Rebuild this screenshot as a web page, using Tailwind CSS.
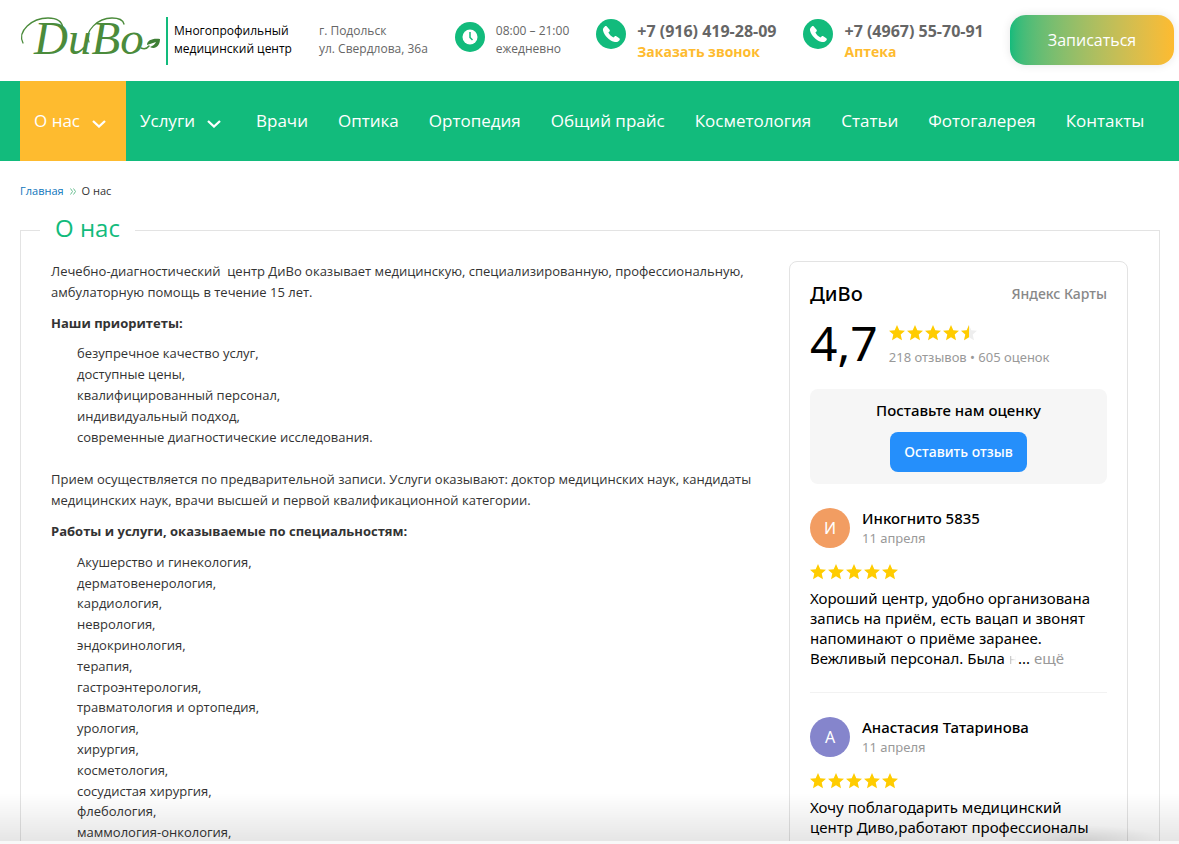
<!DOCTYPE html>
<html lang="ru">
  <head>
    <meta charset="UTF-8" />
    <meta name="viewport" content="width=device-width, initial-scale=1.0" />
    <title>О нас - ДиВо</title>
    <script src="https://cdn.jsdelivr.net/npm/@tailwindcss/browser@4"></script>
  </head>
  <body class="h-screen overflow-hidden bg-white font-['Open_Sans',sans-serif] text-[13px] leading-[1.6] text-[#333]">
    <!-- Icons -->
    <svg class="hidden">
      <symbol id="star" viewBox="0 0 16 16">
        <path d="M8 0l2.300 5.300 5.700.5-4.300 3.800 1.300 5.700L8 12.300l-5 3 1.300-5.700L0 5.800l5.700-.5z" />
      </symbol>
      <symbol id="phone" viewBox="0 0 30 30">
        <circle cx="15" cy="15" r="15" fill="#12bb7c" />
        <path d="M10.600 7.200c-.6-.4-1.300-.3-1.800.2-1.500 1.200-2.200 2.600-1.700 4.400 1 4.800 6.200 9.800 10.900 11 2.100.6 4.200.1 5.500-1.600.5-.7.4-1.400-.2-1.900l-3-2.100c-.6-.4-1.200-.3-1.700.2l-1.200 1.200c-2-1-4-2.900-5-5l1.100-1.200c.5-.5.5-1.100.1-1.700z" fill="#fff" />
      </symbol>
      <symbol id="chevron" viewBox="0 0 14 8">
        <path d="M1 1l6 5.500L13 1" fill="none" stroke="#fff" stroke-width="2.300" />
      </symbol>
    </svg>

    <!-- Header -->
    <header class="flex h-[81px] items-start pr-[5px] pl-5">
      <a href="#" class="mt-[17px] flex items-center text-xs leading-[18px] text-black">
        <svg class="mr-[6px] h-12 w-[140px] overflow-visible" viewBox="0 0 140 48" fill="none" stroke="#4b8b3b" stroke-linecap="round">
          <path d="M3 26C-3 14 12 1 28 1c8 0 14 3 15 10" stroke-width="1.300" />
          <path d="M69 25C64 14 78 1 92 1c7 0 11 2 12 6" stroke-width="1.300" />
          <text x="14" y="37" font-family="'Liberation Serif', serif" font-style="italic" font-size="47" fill="#4b8b3b" stroke="none">DиВо</text>
          <path d="M121 31q5 2 8-2" stroke-width="1.500" />
          <path d="M127 28c0-5 6-7 13-6 0 7-5 11-10 8 3-1 5-3 6-5-3 1-6 2-9 3z" fill="#3f7f35" stroke="none" />
        </svg>
        <span class="border-l-2 border-[#12bb7c] pt-[5px] pb-[7px] pl-[6px]">Многопрофильный<br />медицинский центр</span>
      </a>
      <div class="mt-[22px] ml-[27px] text-xs leading-[18px] text-[#666]">г. Подольск<br />ул. Свердлова, 36а</div>
      <div class="mt-[22px] ml-[27px] flex gap-[11px] text-xs leading-[18px] text-[#666]">
        <svg class="size-[30px]" viewBox="0 0 30 30">
          <circle cx="15" cy="15" r="15" fill="#12bb7c" />
          <circle cx="15" cy="15" r="7.500" fill="#fff" />
          <path d="M15 10v5.500l2.500 2.500" fill="none" stroke="#12bb7c" stroke-width="1.500" />
        </svg>
        <span>08:00 – 21:00<br />ежедневно</span>
      </div>
      <div class="mt-[19px] ml-[27px] flex gap-[11px]">
        <svg class="size-[30px]"><use href="#phone" /></svg>
        <div class="flex flex-col font-bold">
          <a href="tel:+79164192809" class="text-base leading-6 text-[#666]">+7 (916) 419-28-09</a>
          <a href="#" class="text-sm leading-[18px] text-[#febb2f]">Заказать звонок</a>
        </div>
      </div>
      <div class="mt-[19px] ml-[27px] flex gap-[11px]">
        <svg class="size-[30px]"><use href="#phone" /></svg>
        <div class="flex flex-col font-bold">
          <a href="tel:+74967557091" class="text-base leading-6 text-[#666]">+7 (4967) 55-70-91</a>
          <a href="#" class="text-sm leading-[18px] text-[#febb2f]">Аптека</a>
        </div>
      </div>
      <button class="mt-[15px] ml-auto h-[50px] w-[164px] rounded-2xl bg-linear-to-r from-[#12bb7c] to-[#febb2f] text-base text-white shadow-[0_0_10px_rgba(0,0,0,0.1)]">Записаться</button>
    </header>

    <!-- Menu -->
    <nav class="flex h-20 bg-[#12bb7c] pl-5 text-[17px] whitespace-nowrap text-white">
      <a href="#" class="flex items-center gap-3 bg-[#febb2f] pr-5 pl-[14px]">О нас <svg class="mt-[6px] h-2 w-[14px]"><use href="#chevron" /></svg></a>
      <a href="#" class="flex items-center gap-3 pr-5 pl-[14px]">Услуги <svg class="mt-[6px] h-2 w-[14px]"><use href="#chevron" /></svg></a>
      <a href="#" class="flex items-center px-[15px]">Врачи</a>
      <a href="#" class="flex items-center px-[15px]">Оптика</a>
      <a href="#" class="flex items-center px-[15px]">Ортопедия</a>
      <a href="#" class="flex items-center px-[15px]">Общий прайс</a>
      <a href="#" class="flex items-center px-[15px]">Косметология</a>
      <a href="#" class="flex items-center px-[15px]">Статьи</a>
      <a href="#" class="flex items-center px-[15px]">Фотогалерея</a>
      <a href="#" class="flex items-center px-[15px]">Контакты</a>
    </nav>

    <main class="pt-5 pr-[19px] pl-5">
      <div class="flex items-center gap-[6px] text-[11px] leading-5">
        <a href="#" class="text-[#0e76bc]">Главная</a>
        <svg class="h-[7px] w-[6px]" viewBox="0 0 6 7" fill="none" stroke="#6bbf92"><path d="M.5.500l2 3-2 3M3.500.500l2 3-2 3" /></svg>
        <span>О нас</span>
      </div>

      <fieldset class="mt-2 flex items-start border border-[#e3e3e3] pr-[31px] pb-5 pl-[30px]">
        <legend class="-ml-[11px] px-[15px] pb-1"><h1 class="text-2xl leading-[38px] text-[#12bb7c]">О нас</h1></legend>

        <div class="min-w-0 flex-1 pt-[10px] pr-7">
          <p>Лечебно-диагностический&nbsp; центр ДиВо оказывает медицинскую, специализированную, профессиональную, амбулаторную помощь в течение 15 лет.</p>
          <p class="mt-[10px] font-bold">Наши приоритеты:</p>
          <ul class="mt-[10px] pl-[26px]">
            <li>безупречное качество услуг,</li>
            <li>доступные цены,</li>
            <li>квалифицированный персонал,</li>
            <li>индивидуальный подход,</li>
            <li>современные диагностические исследования.</li>
          </ul>
          <p class="mt-[22px]">Прием осуществляется по предварительной записи. Услуги оказывают: доктор медицинских наук, кандидаты медицинских наук, врачи высшей и первой квалификационной категории.</p>
          <p class="mt-[10px] font-bold">Работы и услуги, оказываемые по специальностям:</p>
          <ul class="mt-[10px] pl-[26px]">
            <li>Акушерство и гинекология,</li>
            <li>дерматовенерология,</li>
            <li>кардиология,</li>
            <li>неврология,</li>
            <li>эндокринология,</li>
            <li>терапия,</li>
            <li>гастроэнтерология,</li>
            <li>травматология и ортопедия,</li>
            <li>урология,</li>
            <li>хирургия,</li>
            <li>косметология,</li>
            <li>сосудистая хирургия,</li>
            <li>флебология,</li>
            <li>маммология-онкология,</li>
          </ul>
        </div>

        <!-- Reviews -->
        <aside class="mt-[10px] w-[339px] shrink-0 rounded-lg border border-[#e3e3e3] p-5 font-['Noto_Sans',sans-serif] text-black">
          <div class="flex items-center justify-between">
            <h2 class="text-xl leading-6 font-medium">ДиВо</h2>
            <a href="#" class="text-sm leading-6 font-medium text-[#888]">Яндекс Карты</a>
          </div>
          <div class="mt-3 flex gap-[11px]">
            <div class="text-5xl leading-[50px]">4,7</div>
            <div class="pt-[7px]">
              <div class="flex gap-[2px] fill-[#fc0]">
                <svg class="size-4"><use href="#star" /></svg>
                <svg class="size-4"><use href="#star" /></svg>
                <svg class="size-4"><use href="#star" /></svg>
                <svg class="size-4"><use href="#star" /></svg>
                <svg class="size-4" viewBox="0 0 16 16">
                  <use href="#star" fill="#eee" />
                  <path d="M8 0v12.300l-5 3 1.300-5.700L0 5.800l5.700-.5z" />
                </svg>
              </div>
              <div class="mt-[6px] text-[13px] leading-5 text-[#999]">218 отзывов • 605 оценок</div>
            </div>
          </div>
          <div class="mt-[21px] flex flex-col items-center rounded-lg bg-[#f6f6f6] pt-[11px] pb-3">
            <div class="text-[15px] leading-5 font-medium">Поставьте нам оценку</div>
            <button class="mt-3 h-10 rounded-lg bg-[#258ffb] px-[14px] text-sm font-medium text-white">Оставить отзыв</button>
          </div>

          <article class="mt-6 border-b border-[#f2f2f2] pb-6">
            <div class="flex gap-3">
              <div class="flex size-10 items-center justify-center rounded-full bg-[#f29d62] text-base text-white">И</div>
              <div>
                <h3 class="text-[15px] leading-5 font-medium">Инкогнито 5835</h3>
                <div class="text-[13px] leading-5 text-[#999]">11 апреля</div>
              </div>
            </div>
            <div class="mt-4 flex gap-[2px] fill-[#fc0]">
              <svg class="size-4"><use href="#star" /></svg>
              <svg class="size-4"><use href="#star" /></svg>
              <svg class="size-4"><use href="#star" /></svg>
              <svg class="size-4"><use href="#star" /></svg>
              <svg class="size-4"><use href="#star" /></svg>
            </div>
            <p class="mt-2 text-[15px] leading-5 whitespace-nowrap">
              Хороший центр, удобно организована<br />
              запись на приём, есть вацап и звонят<br />
              напоминают о приёме заранее.<br />
              Вежливый персонал. Была <span class="bg-linear-to-r from-[#bbb] to-white to-80% bg-clip-text text-transparent">н</span>... <a href="#" class="text-[#999]">ещё</a>
            </p>
          </article>

          <article class="mt-6">
            <div class="flex gap-3">
              <div class="flex size-10 items-center justify-center rounded-full bg-[#8585cc] text-base text-white">А</div>
              <div>
                <h3 class="text-[15px] leading-5 font-medium">Анастасия Татаринова</h3>
                <div class="text-[13px] leading-5 text-[#999]">11 апреля</div>
              </div>
            </div>
            <div class="mt-4 flex gap-[2px] fill-[#fc0]">
              <svg class="size-4"><use href="#star" /></svg>
              <svg class="size-4"><use href="#star" /></svg>
              <svg class="size-4"><use href="#star" /></svg>
              <svg class="size-4"><use href="#star" /></svg>
              <svg class="size-4"><use href="#star" /></svg>
            </div>
            <p class="mt-2 text-[15px] leading-5 whitespace-nowrap">
              Хочу поблагодарить медицинский<br />
              центр Диво,работают профессионалы<br />
              своего дела, очень довольной
            </p>
          </article>
        </aside>
      </fieldset>
    </main>

    <!-- Bottom shade -->
    <div class="pointer-events-none fixed inset-x-0 bottom-0">
      <div class="flex h-12 items-end justify-end bg-linear-to-b from-black/0 to-black/10 pr-4">
        <div class="h-4 w-40 bg-radial-[at_50%_100%] from-black/10 to-transparent to-70%"></div>
      </div>
      <div class="h-[3px] bg-[#f8f8f8]"></div>
    </div>
  </body>
</html>
